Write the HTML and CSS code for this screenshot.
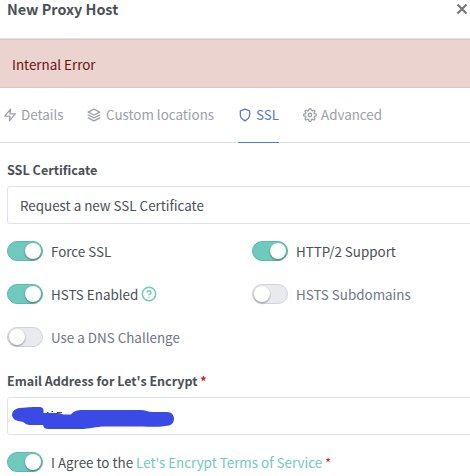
FILE: index.html
```html
<!DOCTYPE html>
<html lang="en">
<head>
<meta charset="utf-8">
<title>New Proxy Host</title>
<link rel="stylesheet" href="styles.css">
</head>
<body>
<div class="modal">
  <header class="modal-header">
    <h1 class="title">New Proxy Host</h1>
    <svg class="close" viewBox="0 0 12 12"><path d="M1.5 1.5l9 9M10.5 1.5l-9 9"/></svg>
  </header>
  <div class="alert">Internal Error</div>
  <nav class="tabs">
    <a class="tab details"><svg class="icon" viewBox="0 0 24 24"><path d="M13 2L3 14h9l-1 8 10-12h-9l1-8z"/></svg><span>Details</span></a>
    <a class="tab locations"><svg class="icon" viewBox="0 0 24 24"><path d="M12 2L2 7l10 5 10-5-10-5zM2 17l10 5 10-5M2 12l10 5 10-5"/></svg><span>Custom locations</span></a>
    <a class="tab ssl active"><svg class="icon" viewBox="0 0 24 24"><path d="M12 22s8-4 8-10V5l-8-3-8 3v7c0 6 8 10 8 10z"/></svg><span>SSL</span></a>
    <a class="tab advanced"><svg class="icon" viewBox="0 0 24 24"><circle cx="12" cy="12" r="3"/><path d="M19.4 15a1.65 1.65 0 0 0 .33 1.82l.06.06a2 2 0 1 1-2.83 2.83l-.06-.06a1.65 1.65 0 0 0-2.8 1.17V21a2 2 0 0 1-4 0v-.09a1.65 1.65 0 0 0-2.91-1.08l-.06.06a2 2 0 1 1-2.83-2.83l.06-.06A1.65 1.65 0 0 0 3.09 14H3a2 2 0 0 1 0-4h.09A1.65 1.65 0 0 0 4.27 7.18l-.06-.06a2 2 0 1 1 2.83-2.83l.06.06A1.65 1.65 0 0 0 10 3.09V3a2 2 0 0 1 4 0v.09a1.65 1.65 0 0 0 2.82 1.17l.06-.06a2 2 0 1 1 2.83 2.83l-.06.06A1.65 1.65 0 0 0 20.91 10H21a2 2 0 0 1 0 4h-.09a1.65 1.65 0 0 0-1.51 1z"/></svg><span>Advanced</span></a>
  </nav>
  <main class="form">
    <div class="label">SSL Certificate</div>
    <div class="control"><span>Request a new SSL Certificate</span></div>
    <div class="switches">
      <div class="option on"><i class="switch"></i><span>Force SSL</span></div>
      <div class="option on"><i class="switch"></i><span>HTTP/2 Support</span></div>
      <div class="option on"><i class="switch"></i><span>HSTS Enabled</span><svg class="help" viewBox="0 0 24 24"><circle cx="12" cy="12" r="10"/><path d="M9.09 9a3 3 0 0 1 5.83 1c0 2-3 3-3 3M12 17h.01"/></svg></div>
      <div class="option"><i class="switch"></i><span>HSTS Subdomains</span></div>
      <div class="option"><i class="switch"></i><span>Use a DNS Challenge</span></div>
    </div>
    <div class="label email">Email Address for Let's Encrypt <b class="required">*</b></div>
    <div class="control redacted">
      <svg class="scribble" viewBox="0 0 164 24"><path class="ink" d="M35 6.500h1.500M39.500 5.500h1.500M45 6.500h5"/><path class="blob" d="M7 2C13 1.500 20 1 27 1c4 0 5 2 4.500 6H46c3 0 4 1.500 6 1.500h7C62 5 65 4 71 4h57c5 0 8 2 13 2h14c9 0 9 12 2 13.500-10 2-18 1-27 1H93c-9 0-15 2.500-25 2.500H36c-3 0-4-1-5-4H18c-5 0-5-3-9-3.500C-2 15-3 4 7 2z"/></svg>
    </div>
    <div class="option on agree"><i class="switch"></i><span>I Agree to the <a class="link">Let's Encrypt Terms of Service</a> <b class="required">*</b></span></div>
  </main>
</div>
</body>
</html>
```
FILE: styles.css
```css
* { box-sizing: border-box; }
body {
  margin: 0;
  overflow: hidden;
  background: #fff;
  color: #495057;
  font: 13.4px/20px "Noto Sans CJK SC", "Noto Sans", sans-serif;
}
.modal { width: 470px; height: 476px; overflow: hidden; }
.modal-header {
  display: flex;
  justify-content: space-between;
  height: 39px;
  padding: 0 2px 0 7px;
  border-bottom: 1px solid #dee2e6;
}
.title { margin: -1px 0 0; font-size: 14.4px; line-height: 20px; font-weight: 700; }
.close { width: 12px; height: 12px; margin-top: 3px; fill: none; stroke: #777; stroke-width: 2.2; }
.alert {
  height: 49px;
  padding: 14px 12px 0;
  background: #ebd3cf;
  border-top: 1px solid #e2c6c5;
  border-bottom: 1px solid #e2c6c5;
  color: #6b1110;
}
.tabs {
  display: flex;
  height: 55px;
  padding-left: 3px;
  border-bottom: 1px solid #dee0e9;
  color: #9aa0ac;
}
.tab { display: flex; height: 55px; padding-top: 16px; gap: 4px; white-space: nowrap; }
.icon { width: 14px; height: 14px; margin-top: 4px; fill: none; stroke: currentColor; stroke-width: 2.2; stroke-linecap: round; stroke-linejoin: round; }
.details { width: 84px; }
.locations { width: 151px; gap: 5px; }
.ssl { width: 41px; margin-right: 24px; }
.active { color: #5579d3; border-bottom: 1px solid #467fcf; }
.form { padding: 17px 0 0 7px; }
.label { height: 26px; font-size: 12.6px; font-weight: 700; white-space: nowrap; }
.control {
  width: 480px;
  height: 38px;
  padding: 8px 12px;
  border: 1px solid #dfe2ec;
  border-radius: 3px;
}
.switches {
  display: grid;
  grid-template-columns: 245px 1fr;
  grid-auto-rows: 20px;
  row-gap: 23px;
  margin-top: 17px;
}
.option { display: flex; height: 20px; color: #6e7687; white-space: nowrap; }
.on { color: #495057; }
.option span { margin: 0 0 0 8px; }
.switch {
  flex: none;
  width: 36px;
  height: 20px;
  padding: 1px;
  border: 1px solid #d0d4df;
  border-radius: 10px;
  background: #e9eaee;
}
.switch::before {
  content: "";
  display: block;
  width: 16px;
  height: 16px;
  border-radius: 50%;
  background: #fff;
  box-shadow: 0 1px 2px rgba(0, 0, 0, .4);
}
.on .switch { background: #70c9bd; border-color: #5eb8ad; }
.on .switch::before { margin-left: 16px; }
.help { width: 16px; height: 16px; margin: 2px 0 0 3px; fill: none; stroke: #70c9bd; stroke-width: 2.2; stroke-linecap: round; }
.email { margin-top: 24px; }
.email { font-size: 12.5px; }
.required { color: #cd201f; font-weight: 700; }
.redacted { padding: 8px 4px; }
.scribble { display: block; width: 164px; height: 24px; overflow: visible; }
.blob { fill: #394be4; }
.ink { fill: none; stroke: #495057; stroke-width: 1; }
.agree { margin-top: 17px; }
.agree .required { font-weight: 400; }
.link { color: #70c9bd; }
```
